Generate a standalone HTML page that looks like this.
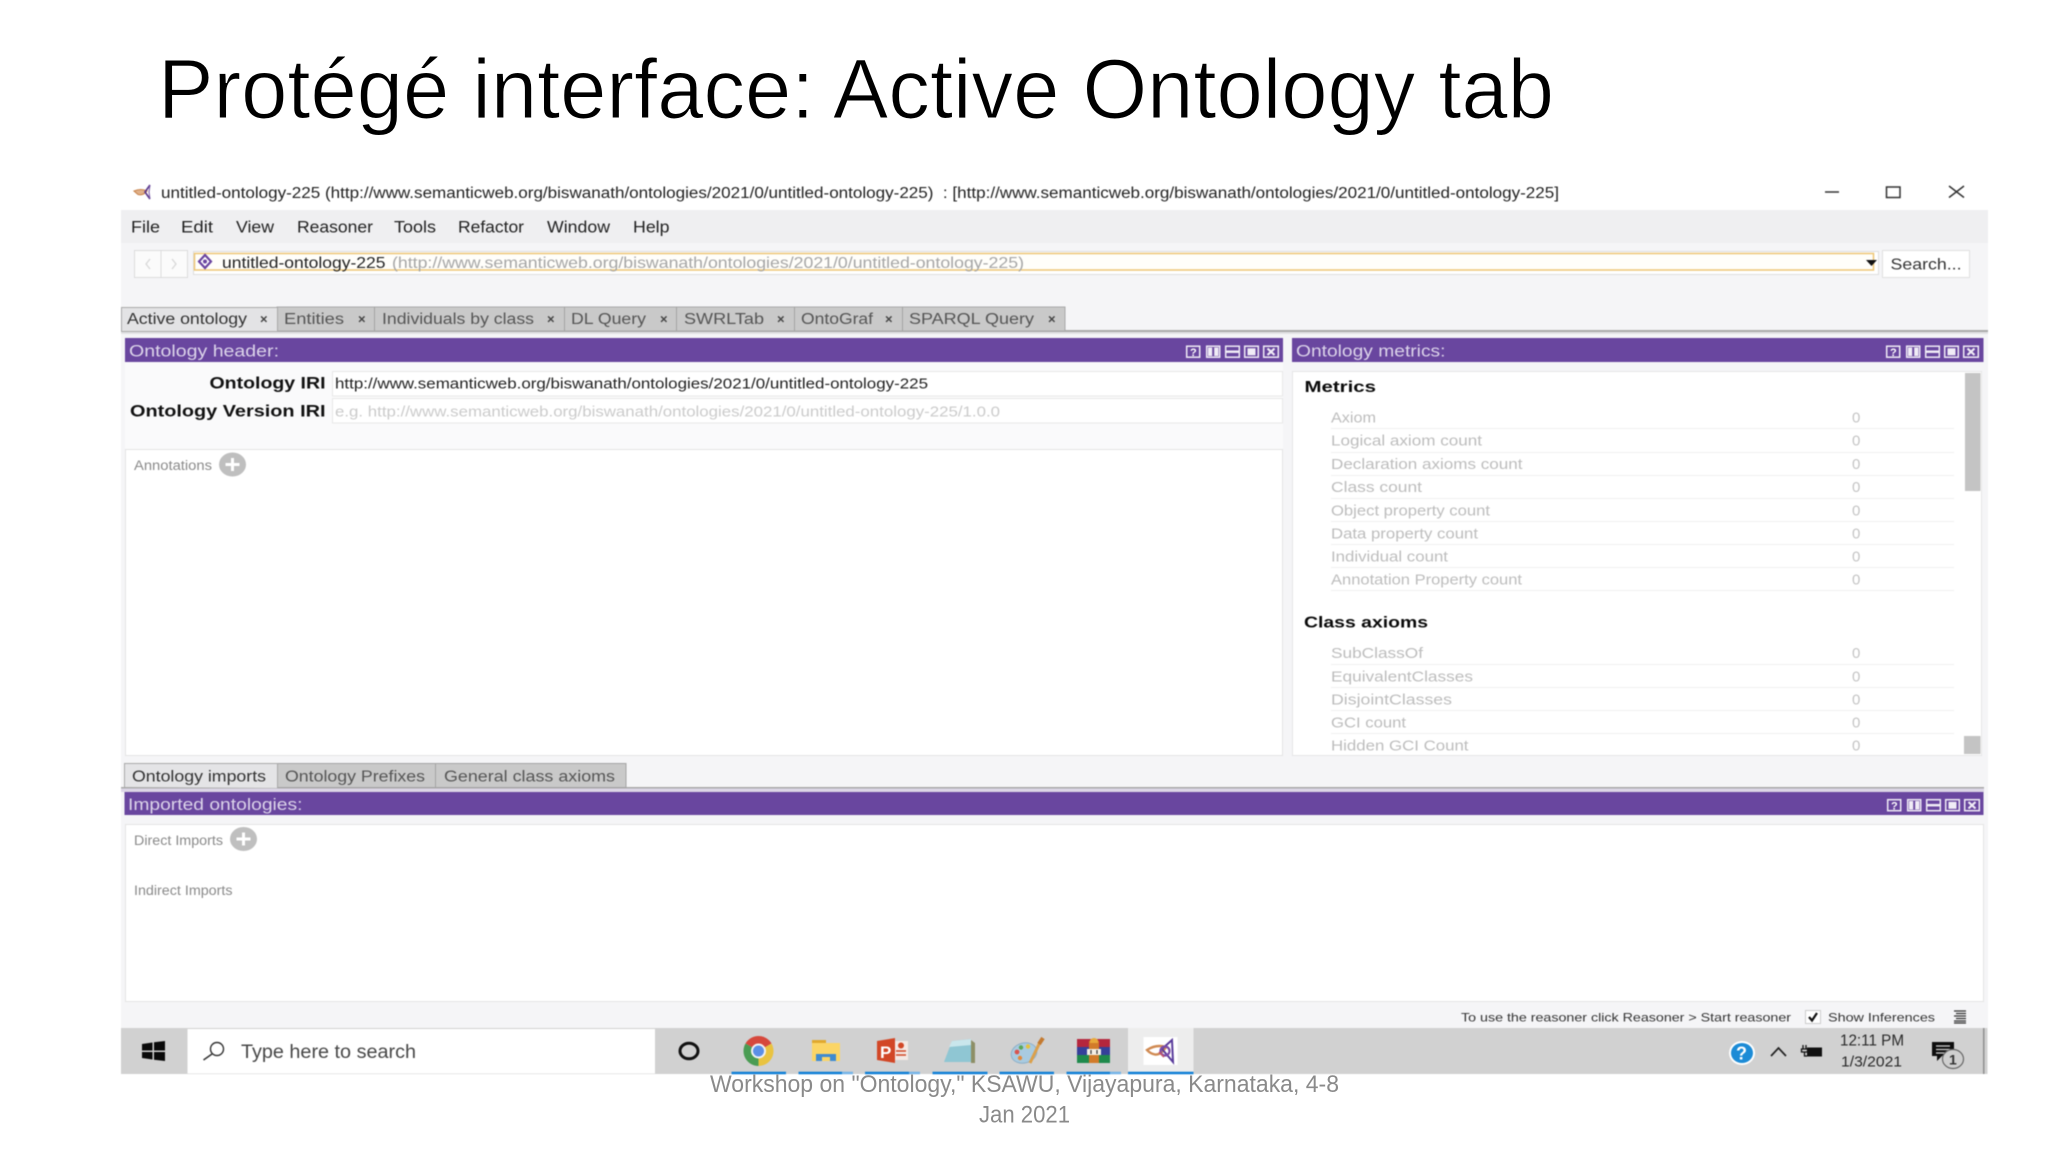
<!DOCTYPE html>
<html><head><meta charset="utf-8"><title>Protégé interface: Active Ontology tab</title>
<style>
html,body{margin:0;padding:0;background:#fff;width:2048px;height:1152px;overflow:hidden}
svg{display:block;position:absolute;left:0;top:0}
text{font-family:"Liberation Sans",Arial,sans-serif;white-space:pre}
.soft{filter:blur(.45px)}
.m{font-size:16.5px;fill:#222}
.tab{font-size:15.5px;fill:#555}
.x{font-size:13px;fill:#444;font-weight:bold}
.row{font-size:15px;fill:#bdbdbd}
.z{font-size:15px;fill:#c4c4c4}
.hd{font-size:17px;fill:#dcd4ea}
.h2{font-size:16px;font-weight:bold;fill:#0a0a0a}
.lb{font-size:17px;font-weight:bold;fill:#111}
.sm{font-size:13.5px;fill:#8a8a8a}
.st{font-size:12px;fill:#333}
.q{font-size:11px;font-weight:bold;fill:#fff}
</style></head><body>
<svg width="2048" height="1152" viewBox="0 0 2048 1152" xmlns="http://www.w3.org/2000/svg">
<rect width="2048" height="1152" fill="#fff"/>

<text x="158" y="118" font-size="84" fill="#000" stroke="#fff" stroke-width="1.100" textLength="1396" lengthAdjust="spacingAndGlyphs">Protégé interface: Active Ontology tab</text>

<g class="soft">
<!-- chrome backgrounds -->
<rect x="121" y="210" width="1867" height="33" fill="#efeff1"/>
<rect x="121" y="243" width="1867" height="785" fill="#f5f5f7"/>

<!-- title bar -->
<path d="M134 191 Q141 188 147 191 Q143 196 138 194.500 Z" fill="#e0b08a" stroke="#c9854e" stroke-width="1.100"/>
<path d="M150 185 L145 192 L150 199" fill="none" stroke="#5b3a8c" stroke-width="1.700"/>
<path d="M150 185 L149 192 L150 199" fill="none" stroke="#7a5aa8" stroke-width="1"/>
<text x="161" y="198" font-size="15.500" fill="#222" textLength="1398" lengthAdjust="spacingAndGlyphs">untitled-ontology-225 (http://www.semanticweb.org/biswanath/ontologies/2021/0/untitled-ontology-225)  : [http://www.semanticweb.org/biswanath/ontologies/2021/0/untitled-ontology-225]</text>
<path d="M1825 192H1839" stroke="#333" stroke-width="1.500"/>
<rect x="1886.500" y="187" width="13.500" height="10.500" fill="none" stroke="#333" stroke-width="1.500"/>
<path d="M1949 186 L1964 197.500 M1964 186 L1949 197.500" stroke="#333" stroke-width="1.500"/>

<!-- menu -->
<text class="m" x="131" y="232.500" textLength="29" lengthAdjust="spacingAndGlyphs">File</text>
<text class="m" x="181" y="232.500" textLength="32" lengthAdjust="spacingAndGlyphs">Edit</text>
<text class="m" x="236" y="232.500" textLength="38" lengthAdjust="spacingAndGlyphs">View</text>
<text class="m" x="297" y="232.500" textLength="76" lengthAdjust="spacingAndGlyphs">Reasoner</text>
<text class="m" x="394" y="232.500" textLength="42" lengthAdjust="spacingAndGlyphs">Tools</text>
<text class="m" x="458" y="232.500" textLength="66" lengthAdjust="spacingAndGlyphs">Refactor</text>
<text class="m" x="547" y="232.500" textLength="63" lengthAdjust="spacingAndGlyphs">Window</text>
<text class="m" x="633" y="232.500" textLength="36.500" lengthAdjust="spacingAndGlyphs">Help</text>

<!-- toolbar -->
<rect x="134.500" y="250.500" width="53" height="27" fill="#fbfbfb" stroke="#dcdcdc"/>
<path d="M161 251V277" stroke="#dcdcdc"/>
<path d="M150 259 L146 264 L150 269 M172 259 L176 264 L172 269" fill="none" stroke="#d8d8d8" stroke-width="1.300"/>
<rect x="193.500" y="251.500" width="1685" height="23" fill="#fff" stroke="#dedede"/>
<rect x="194.500" y="253.500" width="1679" height="16.500" fill="#fffefa" stroke="#eec676" stroke-width="1.500"/>
<path d="M205 255 L211 261.500 L205 268 L199 261.500 Z" fill="#fff" stroke="#6a45a0" stroke-width="2.200"/>
<circle cx="205" cy="261.500" r="2" fill="#6a45a0"/>
<path d="M1866 260H1877L1871.500 266Z" fill="#111"/>
<text x="222" y="268" font-size="16" fill="#222" textLength="163.500" lengthAdjust="spacingAndGlyphs">untitled-ontology-225</text>
<text x="392" y="268" font-size="16" fill="#a6a6a6" textLength="632" lengthAdjust="spacingAndGlyphs">(http://www.semanticweb.org/biswanath/ontologies/2021/0/untitled-ontology-225)</text>
<rect x="1882.500" y="250.500" width="87" height="27" fill="#fff" stroke="#e0e0e0"/>
<text x="1890.500" y="269.500" font-size="16" fill="#333" textLength="71" lengthAdjust="spacingAndGlyphs">Search...</text>

<!-- tabs -->
<rect x="121" y="330" width="1867" height="2" fill="#aaaaaa"/>
<rect x="121" y="332" width="1867" height="2" fill="#e2e2e4"/>
<rect x="277" y="307" width="788" height="24" fill="#c9c9c9" stroke="#a9a9a9"/>
<path d="M121.500 331V307.500H277.500V331" fill="#e3e3e5" stroke="#a9a9a9"/>
<path d="M374.500 307V331M564.500 307V331M676.500 307V331M794.500 307V331M902.500 307V331" stroke="#a4a4a4"/>
<text class="tab" style="fill:#333" x="127" y="324" textLength="120" lengthAdjust="spacingAndGlyphs">Active ontology</text>
<text class="x" x="260" y="323.500">×</text>
<text class="tab" x="284" y="324" textLength="60" lengthAdjust="spacingAndGlyphs">Entities</text>
<text class="x" x="358" y="323.500">×</text>
<text class="tab" x="382" y="324" textLength="152" lengthAdjust="spacingAndGlyphs">Individuals by class</text>
<text class="x" x="547" y="323.500">×</text>
<text class="tab" x="571" y="324" textLength="75" lengthAdjust="spacingAndGlyphs">DL Query</text>
<text class="x" x="660" y="323.500">×</text>
<text class="tab" x="684" y="324" textLength="80" lengthAdjust="spacingAndGlyphs">SWRLTab</text>
<text class="x" x="777" y="323.500">×</text>
<text class="tab" x="801" y="324" textLength="72" lengthAdjust="spacingAndGlyphs">OntoGraf</text>
<text class="x" x="885" y="323.500">×</text>
<text class="tab" x="909" y="324" textLength="125" lengthAdjust="spacingAndGlyphs">SPARQL Query</text>
<text class="x" x="1048" y="323.500">×</text>

<!-- panel headers -->
<rect x="125" y="338" width="1158" height="24" fill="#69469f"/>
<rect x="1292" y="338" width="691.500" height="24" fill="#69469f"/>
<text class="hd" x="129" y="356.500" textLength="150" lengthAdjust="spacingAndGlyphs">Ontology header:</text>
<text class="hd" x="1296" y="356.500" textLength="149.500" lengthAdjust="spacingAndGlyphs">Ontology metrics:</text>

<defs>
<g id="btns" fill="none" stroke="#f0ecf6" stroke-width="1.500">
<rect x=".7" y=".7" width="13" height="11"/>
<rect x="20.700" y=".7" width="13" height="11"/><rect x="22" y="2" width="4.200" height="8.500" fill="#f0ecf6" stroke="none"/><rect x="28.200" y="2" width="4.200" height="8.500" fill="#f0ecf6" stroke="none"/>
<rect x="39.700" y=".7" width="13.600" height="11"/><path d="M40 6.200H53" stroke-width="2.500"/>
<rect x="58.700" y=".7" width="13.600" height="11"/><rect x="61.500" y="2.800" width="8" height="7" fill="#f0ecf6" stroke="none"/>
<rect x="77.700" y=".7" width="14.600" height="11"/><path d="M81.500 3 L88.500 9.500 M88.500 3 L81.500 9.500" stroke-width="2.200"/>
</g>
</defs>
<use href="#btns" x="1186" y="345.500"/><text class="q" x="1190" y="356">?</text>
<use href="#btns" x="1886" y="345.500"/><text class="q" x="1890" y="356">?</text>

<!-- ontology header area -->
<rect x="125" y="362" width="1158" height="87" fill="#fafafb"/>
<text class="lb" x="209.500" y="388.500" textLength="116" lengthAdjust="spacingAndGlyphs">Ontology IRI</text>
<text class="lb" x="130" y="416.500" textLength="195.500" lengthAdjust="spacingAndGlyphs">Ontology Version IRI</text>
<rect x="332.500" y="371.500" width="950" height="24.500" fill="#fff" stroke="#e8e8e8"/>
<rect x="332.500" y="398.500" width="950" height="24.500" fill="#fff" stroke="#e8e8e8"/>
<text x="335" y="388.500" font-size="15" fill="#222" textLength="593" lengthAdjust="spacingAndGlyphs">http://www.semanticweb.org/biswanath/ontologies/2021/0/untitled-ontology-225</text>
<text x="335" y="416.500" font-size="15" fill="#cbcbcb" textLength="665" lengthAdjust="spacingAndGlyphs">e.g. http://www.semanticweb.org/biswanath/ontologies/2021/0/untitled-ontology-225/1.0.0</text>

<!-- annotations -->
<rect x="125.500" y="449.500" width="1157" height="306" fill="#fff" stroke="#e4e4e4"/>
<text class="sm" x="134" y="470" textLength="78" lengthAdjust="spacingAndGlyphs">Annotations</text>
<ellipse cx="232.500" cy="464.500" rx="13.500" ry="12" fill="#bfbfbf"/>
<path d="M225.500 464.500H239.500M232.500 458V471" stroke="#fff" stroke-width="3"/>

<!-- metrics -->
<rect x="1292.500" y="371.500" width="689" height="384" fill="#fff" stroke="#e6e6e6"/>
<rect x="1965" y="373" width="15.500" height="118" fill="#c4c4c4"/>
<rect x="1964" y="736" width="16.500" height="18" fill="#c4c4c4"/>
<text class="h2" x="1304.500" y="392" textLength="71.500" lengthAdjust="spacingAndGlyphs">Metrics</text>
<text class="h2" x="1304" y="627.500" textLength="124" lengthAdjust="spacingAndGlyphs">Class axioms</text>

<path d="M1331 428.500H1954M1331 452.500H1954M1331 475.500H1954M1331 498.500H1954M1331 521.500H1954M1331 544.500H1954M1331 567.500H1954M1331 590.500H1954M1331 664.500H1954M1331 687.500H1954M1331 710.500H1954M1331 733.500H1954" stroke="#f0f0f0"/>

<text class="row" x="1331" y="422.500" textLength="45" lengthAdjust="spacingAndGlyphs">Axiom</text><text class="z" x="1852" y="422.500">0</text>
<text class="row" x="1331" y="445.500" textLength="151" lengthAdjust="spacingAndGlyphs">Logical axiom count</text><text class="z" x="1852" y="445.500">0</text>
<text class="row" x="1331" y="469" textLength="191.500" lengthAdjust="spacingAndGlyphs">Declaration axioms count</text><text class="z" x="1852" y="469">0</text>
<text class="row" x="1331" y="492" textLength="91" lengthAdjust="spacingAndGlyphs">Class count</text><text class="z" x="1852" y="492">0</text>
<text class="row" x="1331" y="515.500" textLength="159" lengthAdjust="spacingAndGlyphs">Object property count</text><text class="z" x="1852" y="515.500">0</text>
<text class="row" x="1331" y="538.500" textLength="147" lengthAdjust="spacingAndGlyphs">Data property count</text><text class="z" x="1852" y="538.500">0</text>
<text class="row" x="1331" y="561.500" textLength="117" lengthAdjust="spacingAndGlyphs">Individual count</text><text class="z" x="1852" y="561.500">0</text>
<text class="row" x="1331" y="584.500" textLength="191" lengthAdjust="spacingAndGlyphs">Annotation Property count</text><text class="z" x="1852" y="584.500">0</text>
<text class="row" x="1331" y="658" textLength="92" lengthAdjust="spacingAndGlyphs">SubClassOf</text><text class="z" x="1852" y="658">0</text>
<text class="row" x="1331" y="681.500" textLength="142" lengthAdjust="spacingAndGlyphs">EquivalentClasses</text><text class="z" x="1852" y="681.500">0</text>
<text class="row" x="1331" y="704.500" textLength="121" lengthAdjust="spacingAndGlyphs">DisjointClasses</text><text class="z" x="1852" y="704.500">0</text>
<text class="row" x="1331" y="727.500" textLength="75" lengthAdjust="spacingAndGlyphs">GCI count</text><text class="z" x="1852" y="727.500">0</text>
<text class="row" x="1331" y="750.500" textLength="137.500" lengthAdjust="spacingAndGlyphs">Hidden GCI Count</text><text class="z" x="1852" y="750.500">0</text>

<!-- sub tabs -->
<rect x="121" y="787" width="1863" height="1.500" fill="#a9a9a9"/>
<rect x="121" y="788.500" width="1863" height="3.500" fill="#dcd6e6"/>
<rect x="277" y="763.500" width="349" height="24" fill="#c9c9c9" stroke="#a4a4a4"/>
<path d="M124.500 787V763.500H277.500V788" fill="#e4e4e6" stroke="#a9a9a9"/>
<path d="M435.500 763V787" stroke="#a4a4a4"/>
<text class="tab" style="fill:#333" x="132" y="781.500" textLength="134" lengthAdjust="spacingAndGlyphs">Ontology imports</text>
<text class="tab" x="285" y="781.500" textLength="140" lengthAdjust="spacingAndGlyphs">Ontology Prefixes</text>
<text class="tab" x="444" y="781.500" textLength="171" lengthAdjust="spacingAndGlyphs">General class axioms</text>

<!-- imports -->
<rect x="124.500" y="792" width="1859" height="23" fill="#69469f"/>
<text class="hd" x="128" y="810" textLength="174.500" lengthAdjust="spacingAndGlyphs">Imported ontologies:</text>
<use href="#btns" x="1887" y="799"/><text class="q" x="1891" y="809.500">?</text>
<rect x="125.500" y="824.500" width="1858" height="177" fill="#fff" stroke="#e4e4e4"/>
<text class="sm" x="134" y="845" textLength="89" lengthAdjust="spacingAndGlyphs">Direct Imports</text>
<ellipse cx="243.500" cy="839" rx="13.500" ry="12" fill="#bfbfbf"/>
<path d="M236.500 839H250.500M243.500 832.500V845.500" stroke="#fff" stroke-width="3"/>
<text class="sm" x="134" y="895" textLength="98.500" lengthAdjust="spacingAndGlyphs">Indirect Imports</text>

<!-- status -->
<text class="st" x="1461" y="1021.500" textLength="330" lengthAdjust="spacingAndGlyphs">To use the reasoner click Reasoner &gt; Start reasoner</text>
<rect x="1805.500" y="1010.500" width="15" height="13" fill="#fff" stroke="#ccc"/>
<path d="M1809 1017 L1812 1020.500 L1817 1013" fill="none" stroke="#111" stroke-width="2.200"/>
<text class="st" x="1828" y="1021.500" textLength="107" lengthAdjust="spacingAndGlyphs">Show Inferences</text>
<path d="M1954 1011H1966M1956 1013.500H1966M1954 1016H1966M1956 1018.500H1966M1954 1021H1966M1954 1023H1966" stroke="#333" stroke-width="1.200"/>

<!-- taskbar -->
<rect x="121" y="1028" width="1866.500" height="46" fill="#d1d1d1"/>
<rect x="187.500" y="1029" width="467.500" height="44.500" fill="#fff"/>
<path d="M142 1044 L152.500 1042.500V1050.500H142Z M154 1042.300 L165 1041V1050.500H154Z M142 1052H152.500V1059.500L142 1058Z M154 1052H165V1061L154 1059.700Z" fill="#0a0a0a"/>
<circle cx="217" cy="1049" r="6.500" fill="none" stroke="#333" stroke-width="1.400"/>
<path d="M212 1054 L203.500 1060" stroke="#333" stroke-width="1.500"/>
<text x="241" y="1058" font-size="19" fill="#474747" textLength="175" lengthAdjust="spacingAndGlyphs">Type here to search</text>
<ellipse cx="689" cy="1051" rx="9" ry="7.800" fill="none" stroke="#111" stroke-width="3"/>

<!-- chrome -->
<path d="M758.500 1051 L745.500 1043.500 A15 15 0 0 1 771.500 1043.500Z" fill="#d6483c"/>
<path d="M758.500 1051 L771.500 1043.500 A15 15 0 0 1 758.500 1066Z" fill="#e9c341"/>
<path d="M758.500 1051 L758.500 1066 A15 15 0 0 1 745.500 1043.500Z" fill="#4a9c53"/>
<circle cx="758.500" cy="1051" r="7.500" fill="#f2f2f2"/><circle cx="758.500" cy="1051" r="5.500" fill="#5b8fe6"/>
<!-- explorer -->
<rect x="812" y="1040" width="14" height="4" fill="#e0a92e"/>
<rect x="812" y="1043" width="28" height="18" fill="#fbd565"/>
<path d="M816 1061V1054H836V1061H830V1057H822V1061Z" fill="#3f8bd0"/>
<!-- powerpoint -->
<rect x="891" y="1041" width="17" height="19" fill="#f4e9e4"/>
<path d="M896 1051H906M896 1055H906" stroke="#d24726" stroke-width="1.500"/>
<circle cx="901" cy="1045.500" r="3" fill="#d24726"/>
<path d="M877 1041 L895 1038V1063 L877 1060Z" fill="#d24726"/>
<text x="880" y="1058" font-size="17" font-weight="bold" fill="#fff">P</text>
<!-- notepad -->
<path d="M952 1041 L971 1039 L971 1062 L944 1062Z" fill="#8fc6d3"/>
<path d="M952 1041 L971 1039 L971 1045 L949 1047Z" fill="#c9e6ec"/>
<path d="M971 1040 L975 1043 V1063 H971Z" fill="#8d8f66"/>
<!-- paint -->
<ellipse cx="1024" cy="1053" rx="13" ry="10" transform="rotate(-15 1024 1053)" fill="#a9cbe0" stroke="#8fb0c8"/>
<circle cx="1017" cy="1052" r="2.400" fill="#d8554f"/><circle cx="1021" cy="1047.500" r="2.200" fill="#5aa85a"/><circle cx="1028" cy="1046.500" r="2.200" fill="#e6c23e"/><circle cx="1020" cy="1058" r="2.200" fill="#e58a3a"/>
<path d="M1041 1040 L1030 1063" stroke="#dca04a" stroke-width="3"/>
<path d="M1043 1038 L1039 1044" stroke="#c47a30" stroke-width="4"/>
<!-- winrar -->
<rect x="1077" y="1039" width="33" height="8" fill="#b5263d"/>
<rect x="1077" y="1047" width="33" height="8" fill="#35409a"/>
<rect x="1077" y="1055" width="33" height="8" fill="#1f8a4c"/>
<rect x="1089" y="1041" width="10" height="22" fill="#d27b2a"/>
<path d="M1090 1043V1040 Q1094 1036 1098 1040V1043Z" fill="#e8a83a"/>
<rect x="1087" y="1049" width="14" height="6" fill="#f4efe6"/>
<path d="M1091 1050V1054M1097 1050V1054" stroke="#333" stroke-width="1.200"/>
<!-- protege -->
<rect x="1128" y="1028" width="65.500" height="45" fill="#ededed"/>
<rect x="1143.500" y="1037" width="34" height="28" fill="#fff"/>
<path d="M1147 1050 Q1156 1044 1166 1047 Q1161 1055 1155 1054.500 Q1150 1053.500 1147 1050Z" fill="none" stroke="#d08a52" stroke-width="2.400"/>
<path d="M1172 1040 L1162 1049 L1173 1062 Z" fill="none" stroke="#5a3c9c" stroke-width="2"/>
<circle cx="1165" cy="1051" r="4.500" fill="none" stroke="#7a4ba8" stroke-width="2.200"/>
<path d="M1159 1052 L1164 1057" stroke="#c2566a" stroke-width="1.700"/>
<!-- running underlines -->
<path d="M731.500 1073H786M798.500 1073H842M865 1073H909M932.500 1073H987.500M999.500 1073H1054M1066.500 1073H1110M1128 1073H1193.500" stroke="#0f7fd6" stroke-width="2.400"/>
<path d="M842 1073H853M909 1073H920M1110 1073H1121" stroke="#74b4e8" stroke-width="2.400"/>

<!-- tray -->
<ellipse cx="1742" cy="1053" rx="13" ry="12" fill="#fff"/>
<ellipse cx="1742" cy="1053" rx="11" ry="10" fill="#1c8bd6"/>
<text x="1736" y="1059.500" font-size="18" font-weight="bold" fill="#fff">?</text>
<path d="M1771 1056 L1778.500 1048 L1786 1056" fill="none" stroke="#222" stroke-width="1.700"/>
<rect x="1807" y="1047.500" width="15" height="9" fill="#111"/>
<path d="M1803 1045V1049M1806 1045V1049M1801.500 1049H1807.500V1052H1801.500ZM1804.500 1052V1056H1807" fill="none" stroke="#111" stroke-width="1.300"/>
<text x="1840" y="1045.500" font-size="15.500" fill="#2a2a2a" textLength="64" lengthAdjust="spacingAndGlyphs">12:11 PM</text>
<text x="1841" y="1066.500" font-size="15" fill="#2a2a2a" textLength="61" lengthAdjust="spacingAndGlyphs">1/3/2021</text>
<path d="M1932 1042H1954V1056H1942 L1937 1061V1056H1932Z" fill="#0d0d0d"/>
<path d="M1936 1046H1950M1936 1049.500H1950M1936 1053H1945" stroke="#d1d1d1" stroke-width="1.200"/>
<ellipse cx="1953" cy="1059" rx="10.500" ry="9.500" fill="#cfcfcf" stroke="#666" stroke-width="1.200"/>
<text x="1949" y="1064.500" font-size="14" font-weight="bold" fill="#333">1</text>
<rect x="1983" y="1028" width="1.500" height="46" fill="#8f8f8f"/>
</g>

<!-- footer -->
<text x="710" y="1092" font-size="24" fill="#8a8a8a" textLength="629" lengthAdjust="spacingAndGlyphs">Workshop on "Ontology," KSAWU, Vijayapura, Karnataka, 4-8</text>
<text x="979" y="1122.500" font-size="24" fill="#8a8a8a" textLength="91" lengthAdjust="spacingAndGlyphs">Jan 2021</text>
</svg>
</body></html>
